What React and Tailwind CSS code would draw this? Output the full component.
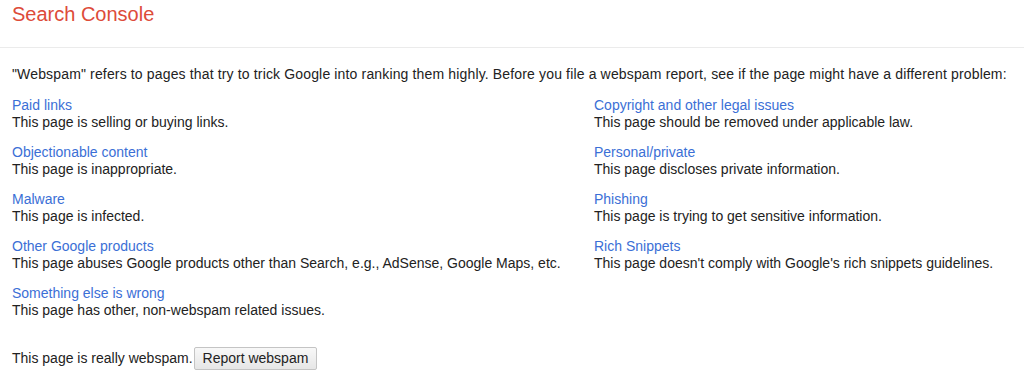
import React from "react";

const left = [
  ["Paid links", "This page is selling or buying links."],
  ["Objectionable content", "This page is inappropriate."],
  ["Malware", "This page is infected."],
  ["Other Google products", "This page abuses Google products other than Search, e.g., AdSense, Google Maps, etc."],
  ["Something else is wrong", "This page has other, non-webspam related issues."],
];
const right = [
  ["Copyright and other legal issues", "This page should be removed under applicable law."],
  ["Personal/private", "This page discloses private information."],
  ["Phishing", "This page is trying to get sensitive information."],
  ["Rich Snippets", "This page doesn't comply with Google's rich snippets guidelines."],
];

function Item({ title, desc }) {
  return (
    <div className="mb-[13px]">
      <a href="#" className="block text-[#3b6fd6] no-underline">{title}</a>
      <div className="text-[#222]">{desc}</div>
    </div>
  );
}

export default function App() {
  return (
    <div className="w-[1024px] h-[381px] bg-white font-['Liberation_Sans',Arial,sans-serif] text-[14px] leading-[17px] text-[#222] overflow-hidden">
      <div className="h-[48px] border-b border-[#ebebeb] pl-3">
        <div className="text-[20px] leading-[28px] text-[#dd4b39]">Search Console</div>
      </div>
      <div className="pl-3 pt-[18px]">
        <p className="mb-[14px] tracking-[0.15px]">
          "Webspam" refers to pages that try to trick Google into ranking them highly. Before you file a webspam report, see if the page might have a different problem:
        </p>
        <div className="flex">
          <div className="w-[582px]">
            {left.map(([t, d]) => <Item key={t} title={t} desc={d} />)}
          </div>
          <div>
            {right.map(([t, d]) => <Item key={t} title={t} desc={d} />)}
          </div>
        </div>
        <div className="flex items-center mt-[15px]">
          <span>This page is really webspam.</span>
          <button className="ml-[1px] h-[23px] px-[8px] border border-[#c4c4c4] rounded-[2px] bg-gradient-to-b from-[#f8f8f8] to-[#e6e6e6] text-[#222] text-[14px] leading-[17px]">
            Report webspam
          </button>
        </div>
      </div>
    </div>
  );
}
